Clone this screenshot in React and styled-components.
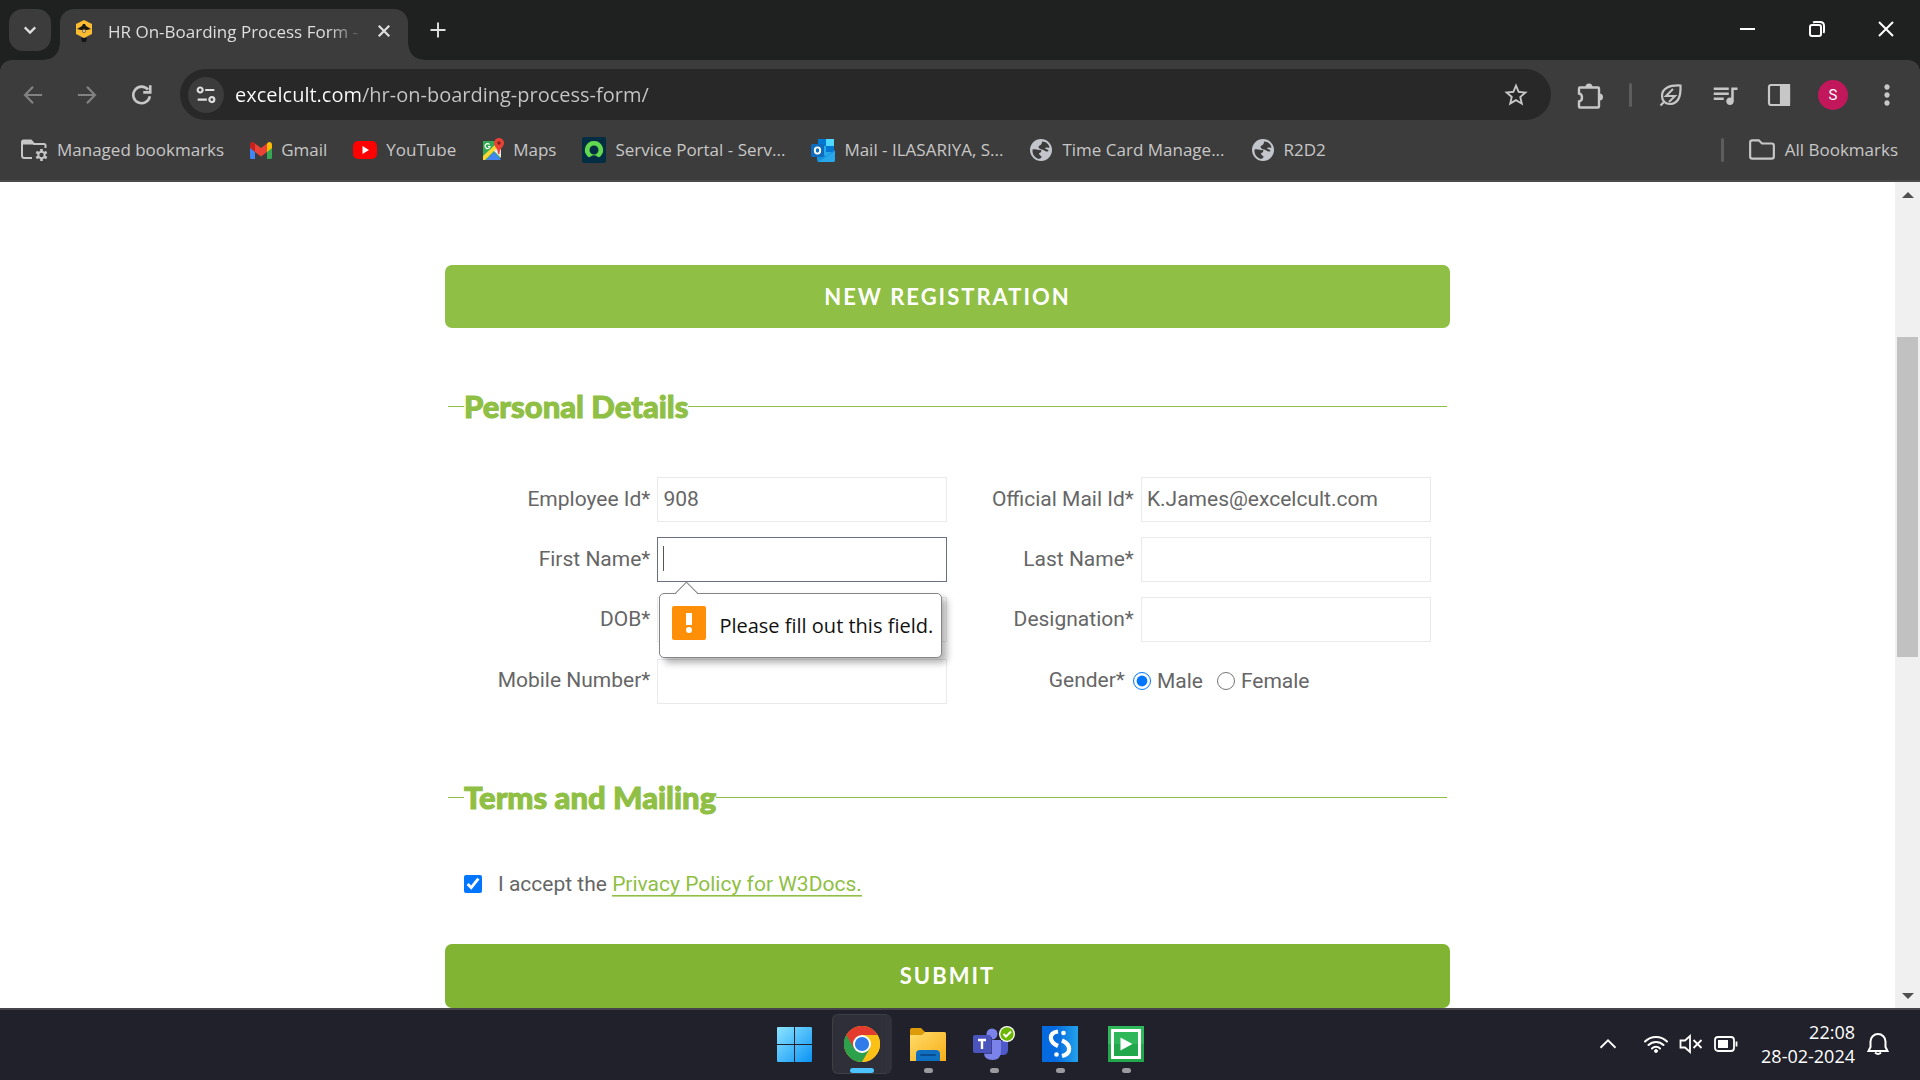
import React from "react";
import styled, { createGlobalStyle, css } from "styled-components";
import { MdStarBorder, MdQueueMusic, MdMoreVert } from "react-icons/md";

const ui = '"Open Sans", "Noto Sans", sans-serif';

const Global = createGlobalStyle`
  *, *::before, *::after { box-sizing: border-box; }
  html, body { margin: 0; padding: 0; }
  body { background: #fff; font-family: Roboto, sans-serif; overflow: hidden; }
  button { font: inherit; color: inherit; border: 0; padding: 0; background: none; }
  svg { display: block; flex: none; }
`;

const Desktop = styled.div`
  display: flex;
  flex-direction: column;
  height: 100vh;
  background: #1f2120;
`;

/* ---------- tab strip ---------- */
const TabStrip = styled.header`
  display: flex;
  align-items: flex-start;
  height: 60px;
  padding-left: 9px;
  color: #dedede;
  font: 17px/24px ${ui};
`;
const TabSearch = styled.button`
  display: grid;
  place-items: center;
  width: 42px;
  height: 42px;
  margin: 9px 9px 0 0;
  border-radius: 14px;
  background: #3c3c3c;
`;
const Tab = styled.div`
  position: relative;
  display: flex;
  align-items: center;
  width: 348px;
  height: 51px;
  margin-top: 9px;
  padding: 0 13px 8px 16px;
  border-radius: 14px 14px 0 0;
  background: #3c3c3c;
  &::before, &::after {
    content: "";
    position: absolute;
    bottom: 0;
    width: 15px;
    height: 15px;
  }
  &::before { right: 100%; background: radial-gradient(circle at 0 0, transparent 14px, #3c3c3c 15px); }
  &::after { left: 100%; background: radial-gradient(circle at 100% 0, transparent 14px, #3c3c3c 15px); }
`;
const TabTitle = styled.span`
  flex: 1;
  margin: 3px 0 0 16px;
  white-space: nowrap;
  mask-image: linear-gradient(90deg, #000 220px, transparent 256px);
`;
const PlainButton = styled.button`
  display: grid;
  place-items: center;
  width: ${(p) => p.$w || 22}px;
  height: ${(p) => p.$h || 22}px;
`;
const NewTab = styled(PlainButton)`
  margin-left: 9px;
`;
const WindowControls = styled.div`
  display: flex;
  margin-left: auto;
  color: #fff;
`;

/* ---------- toolbar ---------- */
const Chrome = styled.section`
  flex: none;
  border-bottom: 2px solid #4a4a4a;
  border-radius: 12px 12px 0 0;
  background: #3c3c3c;
  color: #c7c7c7;
`;
const Toolbar = styled.div`
  display: flex;
  align-items: center;
  height: 69px;
  padding: 0 6px;
`;
const ToolButton = styled(PlainButton)`
  width: 54px;
  height: 42px;
  opacity: ${(p) => (p.disabled ? 0.5 : 1)};
  color: #c7c7c7;
`;
const Omnibox = styled.div`
  flex: 1;
  display: flex;
  align-items: center;
  height: 51px;
  margin: 0 12px;
  padding: 0 8px;
  border-radius: 26px;
  background: #282828;
`;
const SiteInfo = styled.button`
  display: grid;
  place-items: center;
  width: 36px;
  height: 36px;
  border-radius: 50%;
  background: #3c3c3c;
  color: #dedede;
`;
const Url = styled.input`
  flex: 1;
  min-width: 0;
  margin-left: 11px;
  padding: 0;
  border: 0;
  outline: 0;
  color: transparent;
  background: linear-gradient(90deg, #fff 126px, #c7c7c7 126px);
  background-clip: text;
  font: 20px/30px ${ui};
`;
const Divider = styled.span`
  width: 3px;
  height: 24px;
  border-radius: 2px;
  background: #5d5d5d;
`;
const ToolDivider = styled(Divider)`
  margin: 0 12px;
`;
const Avatar = styled.button`
  display: grid;
  place-items: center;
  width: 30px;
  height: 30px;
  margin: 0 12px;
  border-radius: 50%;
  background: #c2185b;
  color: #fff;
  font: 15px/30px Roboto, sans-serif;
`;

/* ---------- bookmarks ---------- */
const Bookmarks = styled.nav`
  display: flex;
  align-items: center;
  gap: 26px;
  height: 51px;
  padding: 0 22px 9px 20px;
  font: 17px/24px ${ui};
`;
const Bookmark = styled.a`
  display: flex;
  align-items: center;
  gap: 9px;
  color: #c7c7c7;
  text-decoration: none;
  white-space: nowrap;
`;
const AllBookmarks = styled.div`
  display: flex;
  align-items: center;
  gap: 24px;
  margin-left: auto;
`;

/* ---------- web page ---------- */
const Viewport = styled.div`
  flex: 1;
  min-height: 0;
  display: flex;
  background: #fff;
`;
const Page = styled.main`
  flex: 1;
  min-width: 0;
  overflow: hidden;
  padding-top: 83px;
  color: #666;
  font: 21px/32px Roboto, sans-serif;
`;
const Form = styled.form`
  max-width: 1005px;
  margin: 0 auto;
`;
const bar = css`
  width: 100%;
  height: 63px;
  border-radius: 7px;
  color: #fff;
  text-align: center;
  font: 700 22px/63px Lato, sans-serif;
  letter-spacing: 2px;
`;
const FormTitle = styled.h2`
  ${bar}
  margin: 0 0 54px;
  background: #8fbf44;
`;
const Submit = styled.button`
  ${bar}
  height: 64px;
  margin-top: 44px;
  padding-bottom: 2px;
  background: #82b433;
`;
const Group = styled.fieldset`
  min-width: 0;
  margin: 0 3px;
  padding: 47px 16px 0;
  border: 0;
  border-top: 1px solid #8fbf44;
  & + & { margin-top: 68px; }
`;
const Legend = styled.legend`
  padding: 0;
  color: #8fbf44;
  font: 900 31px/48px Lato, sans-serif;
  -webkit-text-stroke: 1px #8fbf44;
`;
const Fields = styled.div`
  display: grid;
  grid-template-columns: 1fr 1fr;
  grid-template-rows: 45px 45px 45px 48px;
  row-gap: 15px;
`;
const Field = styled.div`
  position: relative;
  display: grid;
  grid-template-columns: 2fr 3fr;
  align-items: center;
`;
const Label = styled.label`
  padding-right: ${(p) => (p.$wide ? 16 : 7)}px;
  padding-bottom: 2px;
  text-align: right;
  white-space: nowrap;
`;
const TextInput = styled.input`
  display: block;
  width: 100%;
  height: 45px;
  padding: 0 5px 2px;
  border: 1px solid ${(p) => (p.$active ? "#6b7080" : "#e8eaed")};
  outline: 0;
  border-radius: 0;
  background: #fff;
  color: #666;
  font: 21px/30px Roboto, sans-serif;
`;
const InputWrap = styled.div`
  position: relative;
`;
const Caret = styled.span`
  position: absolute;
  left: 6px;
  top: 9px;
  width: 1px;
  height: 25px;
  background: #555;
`;
const Bubble = styled.div`
  position: absolute;
  z-index: 2;
  left: 2px;
  top: 56px;
  display: flex;
  align-items: center;
  gap: 13px;
  width: 283px;
  height: 65px;
  padding: 12px 0 12px 12px;
  border: 1px solid #858585;
  border-radius: 5px;
  background: #fff;
  box-shadow: 5px 5px 7px rgba(0, 0, 0, 0.3);
  color: #111;
  white-space: nowrap;
  font: 20px/30px ${ui};
  svg { align-self: flex-start; }
  &::before {
    content: "";
    position: absolute;
    left: 18px;
    top: -9px;
    width: 17px;
    height: 17px;
    border: solid #858585;
    border-width: 1px 0 0 1px;
    background: linear-gradient(135deg, #fff 50%, transparent 50%);
    transform: rotate(45deg);
  }
`;
const Radios = styled.div`
  display: flex;
  align-items: center;
  gap: 14px;
  margin-left: -8px;
`;
const Choice = styled.label`
  display: flex;
  align-items: center;
  gap: ${(p) => p.$gap || 6}px;
`;
const Tick = styled.input`
  width: 18px;
  height: 18px;
  margin: 0;
  accent-color: #0075ff;
`;
const Policy = styled.a`
  display: inline-block;
  border-bottom: 1px solid #bcd98f;
  box-shadow: inset 0 -1px #8fbf44;
  color: #8fbf44;
  text-decoration: none;
  line-height: 24px;
`;

/* ---------- scrollbar ---------- */
const Scrollbar = styled.div`
  display: flex;
  flex-direction: column;
  width: 25px;
  background: #f0f0f0;
  color: #505050;
`;
const Track = styled.div`
  flex: 1;
  display: grid;
  grid-template-rows: 130fr 320fr 326fr;
  padding: 0 2px;
`;
const Thumb = styled.div`
  grid-row: 2;
  background: #c1c1c1;
`;

/* ---------- taskbar ---------- */
const Taskbar = styled.footer`
  flex: none;
  display: grid;
  grid-template-columns: 1fr auto 1fr;
  height: 72px;
  padding-bottom: 2px;
  border-top: 2px solid #454449;
  background: #20212a;
  color: #fff;
`;
const Apps = styled.div`
  grid-column: 2;
  display: flex;
  align-items: center;
`;
const AppButton = styled.button`
  position: relative;
  display: grid;
  place-items: center;
  width: ${(p) => (p.$active ? 60 : 66)}px;
  height: 60px;
  margin: ${(p) => (p.$active ? "0 3px 0 5px" : 0)};
  border-radius: 6px;
  ${(p) =>
    p.$active &&
    css`
      border: 1px solid #3d3e46;
      border-right: 7px solid #30313a;
      background: #2e2f38;
      padding-left: 6px;
    `}
  &::after {
    content: "";
    position: absolute;
    bottom: ${(p) => (p.$active ? 0 : 1)}px;
    left: 50%;
    display: ${(p) => (p.$open ? "block" : "none")};
    width: ${(p) => (p.$active ? 24 : 9)}px;
    height: 5px;
    margin-left: ${(p) => (p.$active ? -9 : -4)}px;
    border-radius: 3px;
    background: ${(p) => (p.$active ? "#4cc2ff" : "#9a9a9f")};
  }
`;
const Tray = styled.div`
  display: flex;
  align-items: center;
  justify-content: flex-end;
  gap: 11px;
  padding-right: 30px;
`;
const Clock = styled.time`
  margin-left: 12px;
  text-align: right;
  font: 18px/24px ${ui};
`;
const Overflow = styled(PlainButton)`
  margin-right: 14px;
`;

/* ---------- icons ---------- */
const Line = ({ s = 24, w = 2, box = 24, children, ...rest }) => (
  <svg width={s} height={s} viewBox={`0 0 ${box} ${box}`} fill="none" stroke="currentColor" strokeWidth={w} aria-hidden="true" {...rest}>
    {children}
  </svg>
);
const BeeIcon = () => (
  <svg width="16" height="22" viewBox="0 0 16 22">
    <path d="M8 0l8 4v10l-8 4-8-4V4z" fill="#fbbc34" />
    <path d="M1 9l5-3 1-2h2l1 2 5 3-4 1H5z" fill="#1c1a12" />
    <circle cx="8" cy="11" r="2" fill="#8a6a30" />
    <circle cx="8" cy="11" r="1" fill="#e8e0d0" />
    <path d="M5 18h6l-1 4H6z" fill="#151515" />
  </svg>
);
const GearFolder = () => (
  <Line s={28} box={28}>
    <path d="M12 22H4.500q-2.500 0-2.500-2.500V6q0-1.500 1.500-1.500H11l3 3.500h10q1.500 0 1.500 1.500V12" />
    <path d="M2 4.500h9l3 4H2z" fill="currentColor" stroke="none" />
    <circle cx="21.500" cy="19" r="3.200" />
    <path strokeWidth="2.600" d="M21.500 13v2.400M21.500 22.600V25M16.300 16l2.100 1.200M24.600 20.800l2.100 1.200M16.300 22l2.100-1.200M24.600 17.200l2.100-1.200" />
  </Line>
);
const GmailIcon = () => (
  <svg width="22" height="17" viewBox="0 0 22 17">
    <path d="M0 3h5v14H1.500Q0 17 0 15.500z" fill="#4285f4" />
    <path d="M17 3h5v12.500q0 1.500-1.500 1.500H17z" fill="#34a853" />
    <path d="M17 1.500Q19-.6 21 .5q1 .7 1 2.500v3l-5 4z" fill="#fbbc04" />
    <path d="M0 3Q0 1.200 1 .5 3-.6 5 1.500V10L0 6z" fill="#c5221f" />
    <path d="M5 1.500L11 6l6-4.500V10l-6 4.500L5 10z" fill="#ea4335" />
  </svg>
);
const YouTubeIcon = () => (
  <svg width="24" height="18" viewBox="0 0 24 18">
    <rect width="24" height="18" rx="5" fill="#f00" />
    <path d="M9.500 5v8l6.500-4z" fill="#fff" />
  </svg>
);
const MapsIcon = () => (
  <svg width="22" height="24" viewBox="0 0 22 24">
    <path d="M1 3h17v19H1z" fill="#34a853" />
    <path d="M10 11l9 9V9h-7z" fill="#e8e8e8" />
    <path d="M1 18L15 5l3 2L3 22H1z" fill="#fdd835" />
    <path d="M4 22l8-8 7 8z" fill="#4285f4" />
    <path d="M7.500 6.500A2.500 2.500 0 1 0 8 8.500H6" stroke="#fff" fill="none" strokeWidth="1.200" />
    <path d="M17 0a5 5 0 0 0-5 5c0 4 4 5 4 11h1.500c0-6 4.500-7 4.500-11a5 5 0 0 0-5-5z" fill="#ea4335" />
    <circle cx="17" cy="5" r="1.800" fill="#7b2320" />
  </svg>
);
const ServiceIcon = () => (
  <svg width="24" height="26" viewBox="0 0 24 26">
    <rect width="24" height="26" rx="2" fill="#032d42" />
    <path d="M12 4a9 9 0 0 0-6.300 15.500c.8.800 1.800.9 2.700.2a5.800 5.800 0 0 1 7.200 0c.9.700 1.900.6 2.700-.2A9 9 0 0 0 12 4zm0 13.500a4.500 4.500 0 1 1 0-9 4.500 4.500 0 0 1 0 9z" fill="#62d84e" />
  </svg>
);
const OutlookIcon = () => (
  <svg width="24" height="24" viewBox="0 0 24 24">
    <rect x="7" y="1" width="16" height="17" rx="1" fill="#28a8ea" />
    <path d="M7 1h8v7H7zM15 8h8v6h-8z" fill="#0078d4" />
    <path d="M15 1h8v7h-8z" fill="#50d9ff" />
    <path d="M6 13l9 5 9-6v10q0 2-2 2H8q-2 0-2-2z" fill="#1490df" />
    <path d="M7 24l17-11v9q0 2-2 2z" fill="#28a8ea" />
    <rect y="6" width="13" height="13" rx="1.500" fill="#0f6cbd" />
    <ellipse cx="6.500" cy="12.500" rx="2.700" ry="3.100" fill="none" stroke="#fff" strokeWidth="1.900" />
  </svg>
);
const GlobeIcon = () => (
  <svg width="24" height="24" viewBox="0 0 24 24">
    <circle cx="12" cy="12" r="11" fill="#c2c5cb" />
    <path d="M3.500 11.500c3-1 5.500.5 8.500.5 1 1.500-.5 3-2 3 0 3 2.500 2 2.500 4 0 1-1.500 1.500-2.500 2-4-1-7-4.500-6.500-9.500zM13 3.500l3 .5c2.500 1 4 3 4.500 5.500-2 1-3.500-1-4.500 1 1 1 3.500 1 3.500 2.500-3 2-4-1.500-7-1.500-1.500-1-3-1-3-3 1.500-1.500 3.500-1.500 3.500-5z" fill="#3c3c3c" />
  </svg>
);
const FolderIcon = () => (
  <Line s={28} box={26}>
    <path d="M2 6q0-2 2-2h6l3 3h9q2 0 2 2v10q0 2-2 2H4q-2 0-2-2z" />
  </Line>
);

const StartIcon = () => (
  <svg width="35" height="35" viewBox="0 0 35 35">
    <defs>
      <linearGradient id="win" x1="0" y1="0" x2="1" y2="1">
        <stop offset="0" stopColor="#8ce4ff" />
        <stop offset="1" stopColor="#0a93f5" />
      </linearGradient>
    </defs>
    <path d="M1 0h16v17H0V1q0-1 1-1zM18 0h16q1 0 1 1v16H18zM0 18h17v17H1q-1 0-1-1zM18 18h17v16q0 1-1 1H18z" fill="url(#win)" />
  </svg>
);
const ChromeIcon = () => (
  <svg width="36" height="36" viewBox="0 0 36 36">
    <circle cx="18" cy="18" r="18" fill="#fbc116" />
    <path d="M18 18L2.400 9A18 18 0 0 0 18 36l9-13z" fill="#2da04b" />
    <path d="M2.400 9A18 18 0 0 1 33.600 9H18v9l-7.800 4.500z" fill="#e33b2e" />
    <path d="M25.800 22.500L18 36A18 18 0 0 0 33.600 9H18z" fill="#fbc116" />
    <circle cx="18" cy="18" r="9" fill="#fff" />
    <circle cx="18" cy="18" r="7.100" fill="#2f7bea" />
  </svg>
);
const ExplorerIcon = () => (
  <svg width="36" height="33" viewBox="0 0 36 33">
    <defs>
      <linearGradient id="fold" x1="0" y1="0" x2="1" y2="1">
        <stop offset="0" stopColor="#ffdc6b" />
        <stop offset="1" stopColor="#f8ae17" />
      </linearGradient>
    </defs>
    <path d="M0 2q0-2 2-2h9l4 4h19q2 0 2 2v6H0z" fill="#dd9a09" />
    <path d="M0 7h12l3-3h19q2 0 2 2v27H0z" fill="url(#fold)" />
    <path d="M6 33v-7q0-4 4-4h16q4 0 4 4v7z" fill="#0f6fc0" />
    <path d="M11 27h14" stroke="#0a4c8c" strokeWidth="2" strokeLinecap="round" />
  </svg>
);
const TeamsIcon = () => (
  <svg width="42" height="36" viewBox="0 0 42 36">
    <circle cx="19" cy="8" r="5.500" fill="#7b83eb" />
    <path d="M26 15h9v9q0 5-5 5h-4z" fill="#5059c9" />
    <path d="M11 14h17v11q0 9-8.500 9T11 27z" fill="#7b83eb" />
    <path d="M18 11h1v17h-8v-3z" fill="#3d438f" />
    <rect y="9" width="18" height="18" rx="2" fill="#4b53bc" />
    <path d="M5 14h8M9 14v9" stroke="#fff" strokeWidth="2.400" />
    <circle cx="34" cy="8" r="8" fill="#fff" />
    <circle cx="34" cy="8" r="6.700" fill="#6bb700" />
    <path d="M30.500 8l2.500 2.500 5-5" stroke="#fff" strokeWidth="2" fill="none" />
  </svg>
);
const LinkAppIcon = () => (
  <svg width="36" height="36" viewBox="0 0 36 36">
    <defs>
      <linearGradient id="sapp"><stop offset="0.350" stopColor="#0569df" /><stop offset="1" stopColor="#22a1ec" /></linearGradient>
    </defs>
    <rect width="36" height="36" fill="url(#sapp)" />
    <g fill="none" stroke="#fff" strokeWidth="4.200">
      <path d="M16 5.500C6 7 7 16 16 20" />
      <path d="M20 14.500c9 4 10 13 0 15.500" />
    </g>
    <circle cx="21.500" cy="7" r="2.300" fill="#fff" />
    <circle cx="14.500" cy="28.500" r="2.300" fill="#fff" />
    <path d="M18 6v24" stroke="#0569df" />
  </svg>
);
const PlayAppIcon = () => (
  <svg width="36" height="36" viewBox="0 0 36 36">
    <rect width="36" height="36" fill="#2eb85a" />
    <path d="M0 18h36v18H0z" fill="#20a84b" />
    <rect x="4.500" y="4.500" width="27" height="27" fill="none" stroke="#fff" strokeWidth="3" />
    <path d="M12.500 11.500v13L24.500 18z" fill="#fff" />
  </svg>
);

const bookmarks = [
  ["Managed bookmarks", GearFolder],
  ["Gmail", GmailIcon],
  ["YouTube", YouTubeIcon],
  ["Maps", MapsIcon],
  ["Service Portal - Serv...", ServiceIcon],
  ["Mail - ILASARIYA, S...", OutlookIcon],
  ["Time Card Manage...", GlobeIcon],
  ["R2D2", GlobeIcon],
];

const apps = [
  ["Start", StartIcon],
  ["Google Chrome", ChromeIcon, true, true],
  ["File Explorer", ExplorerIcon, true],
  ["Teams", TeamsIcon, true],
  ["Shortcut", LinkAppIcon, true],
  ["Player", PlayAppIcon, true],
];

function TextField({ id, label, value = "", active, children }) {
  return (
    <Field>
      <Label htmlFor={id}>{label}</Label>
      <InputWrap>
        <TextInput id={id} name={id} defaultValue={value} $active={active} />
        {children}
      </InputWrap>
    </Field>
  );
}

export default function App() {
  return (
    <Desktop>
      <Global />
      <TabStrip>
        <TabSearch aria-label="Search tabs">
          <Line s={18} w={3}><path d="M5 8.500l7 7 7-7" /></Line>
        </TabSearch>
        <Tab>
          <BeeIcon />
          <TabTitle>HR On-Boarding Process Form -</TabTitle>
          <PlainButton aria-label="Close tab">
            <Line s={18} w={3}><path d="M5 5l14 14M19 5L5 19" /></Line>
          </PlainButton>
        </Tab>
        <NewTab $w={42} $h={60} aria-label="New tab">
          <Line s={18} w={2.6}><path d="M12 2v20M2 12h20" /></Line>
        </NewTab>
        <WindowControls>
          <PlainButton $w={69} $h={58} aria-label="Minimize">
            <Line s={16} w={2} box={16}><path d="M0 8h15" /></Line>
          </PlainButton>
          <PlainButton $w={69} $h={58} aria-label="Restore">
            <Line s={16} w={2} box={16}>
              <rect x="1" y="4" width="11" height="11" rx="2" />
              <path d="M4 1.500Q5 1 6 1h5q4 0 4 4v5q0 1-.5 2" />
            </Line>
          </PlainButton>
          <PlainButton $w={69} $h={58} aria-label="Close">
            <Line s={16} w={2} box={16}><path d="M1 1l14 14M15 1L1 15" /></Line>
          </PlainButton>
        </WindowControls>
      </TabStrip>

      <Chrome>
        <Toolbar>
          <ToolButton disabled aria-label="Back">
            <Line s={20} w={2.6}><path d="M23 12H3M12 2L2.500 12l9.500 10" /></Line>
          </ToolButton>
          <ToolButton disabled aria-label="Forward">
            <Line s={20} w={2.6}><path d="M1 12h20M12 2l9.500 10L12 22" /></Line>
          </ToolButton>
          <ToolButton aria-label="Reload">
            <Line s={21} w={3}><path d="M19.500 6.500A9.500 9.500 0 1 0 21.500 14M22 1.500v8h-8" /></Line>
          </ToolButton>
          <Omnibox>
            <SiteInfo aria-label="Site information">
              <Line s={20} w={2.6}>
                <circle cx="5" cy="6" r="3" /><path d="M11 6h11M2 17.500h11" /><circle cx="19" cy="17.500" r="3" />
              </Line>
            </SiteInfo>
            <Url aria-label="Address" defaultValue="excelcult.com/hr-on-boarding-process-form/" />
            <ToolButton aria-label="Bookmark this tab"><MdStarBorder size={28} /></ToolButton>
          </Omnibox>
          <ToolButton aria-label="Extensions">
            <Line s={28} w={2.4} box={28}>
              <path d="M4 6.500h18q1 0 1 1v18q0 1-1 1H4q-1 0-1-1v-5q3-.500 3-4t-3-4v-5q0-1 1-1z" />
              <path d="M9.500 6a3.500 3.500 0 0 1 7 0zM23.500 12.500a3.500 3.500 0 0 1 0 7z" fill="currentColor" stroke="none" />
            </Line>
          </ToolButton>
          <ToolDivider />
          <ToolButton aria-label="Energy saver">
            <Line s={24} w={2.2}>
              <path d="M21.500 2.500c.5 11-2.500 18-10 18.500-5 .3-8.500-3-8.500-8C3 5.500 10 2 21.500 2.500zM1.500 22.500L6 18" />
              <path d="M14 6l-7 7h9l-6 6" strokeWidth="2" />
            </Line>
          </ToolButton>
          <ToolButton aria-label="Media controls"><MdQueueMusic size={30} /></ToolButton>
          <ToolButton aria-label="Side panel">
            <Line s={24} w={2.2}>
              <rect x="2" y="2" width="20" height="20" rx="2" />
              <path d="M14 2h8v20h-8z" fill="currentColor" />
            </Line>
          </ToolButton>
          <Avatar aria-label="Profile">S</Avatar>
          <ToolButton aria-label="Menu"><MdMoreVert size={32} /></ToolButton>
        </Toolbar>
        <Bookmarks aria-label="Bookmarks">
          {bookmarks.map(([name, Icon]) => (
            <Bookmark href="#" key={name}><Icon />{name}</Bookmark>
          ))}
          <AllBookmarks>
            <Divider />
            <Bookmark href="#"><FolderIcon />All Bookmarks</Bookmark>
          </AllBookmarks>
        </Bookmarks>
      </Chrome>

      <Viewport>
        <Page>
          <Form onSubmit={(e) => e.preventDefault()} noValidate>
            <FormTitle>NEW REGISTRATION</FormTitle>
            <Group>
              <Legend>Personal Details</Legend>
              <Fields>
                <TextField id="employee" label="Employee Id*" value="908" />
                <TextField id="mail" label="Official Mail Id*" value="K.James@excelcult.com" />
                <TextField id="first" label="First Name*" active>
                  <Caret />
                  <Bubble role="alert">
                    <svg width="34" height="34" viewBox="0 0 34 34">
                      <rect width="34" height="34" rx="2" fill="#ff8f07" />
                      <path d="M14 7h6v12h-6z" fill="#fff" />
                      <circle cx="17" cy="24" r="3" fill="#fff" />
                    </svg>
                    Please fill out this field.
                  </Bubble>
                </TextField>
                <TextField id="last" label="Last Name*" />
                <TextField id="dob" label="DOB*" />
                <TextField id="designation" label="Designation*" />
                <TextField id="mobile" label="Mobile Number*" />
                <Field role="radiogroup" aria-labelledby="gender">
                  <Label as="span" id="gender" $wide>Gender*</Label>
                  <Radios>
                    <Choice><Tick type="radio" name="gender" defaultChecked />Male</Choice>
                    <Choice><Tick type="radio" name="gender" />Female</Choice>
                  </Radios>
                </Field>
              </Fields>
            </Group>
            <Group>
              <Legend>Terms and Mailing</Legend>
              <Choice $gap={16}>
                <Tick type="checkbox" defaultChecked />
                <span>I accept the <Policy href="#">Privacy Policy for W3Docs.</Policy></span>
              </Choice>
            </Group>
            <Submit type="submit">SUBMIT</Submit>
          </Form>
        </Page>
        <Scrollbar aria-hidden="true">
          <PlainButton $w={25} $h={25} tabIndex={-1}>
            <svg width="12" height="6" viewBox="0 0 12 6"><path d="M0 6l6-6 6 6z" fill="currentColor" /></svg>
          </PlainButton>
          <Track><Thumb /></Track>
          <PlainButton $w={25} $h={25} tabIndex={-1}>
            <svg width="12" height="6" viewBox="0 0 12 6"><path d="M0 0l6 6 6-6z" fill="currentColor" /></svg>
          </PlainButton>
        </Scrollbar>
      </Viewport>

      <Taskbar>
        <Apps>
          {apps.map(([name, Icon, open, active]) => (
            <AppButton key={name} aria-label={name} $open={open} $active={active}><Icon /></AppButton>
          ))}
        </Apps>
        <Tray>
          <Overflow aria-label="Hidden icons">
            <Line s={18} w={2.4}><path d="M2 17l10-10 10 10" /></Line>
          </Overflow>
          <Line s={24} w={2} strokeLinecap="round">
            <path d="M1 9.500a15.500 15.500 0 0 1 22 0M4.500 13a10.600 10.600 0 0 1 15 0M8 16.500a5.700 5.700 0 0 1 8 0" />
            <circle cx="12" cy="19" r="1.500" fill="currentColor" strokeWidth="1" />
          </Line>
          <Line s={24} w={1.8}>
            <path d="M1.500 8.500h4.500L11 4v16l-5-4.500H1.500zM14.500 8l8 8M22.500 8l-8 8" />
          </Line>
          <Line s={24} w={1.8}>
            <rect x="1" y="5" width="19" height="14" rx="3" />
            <path d="M4 8h10v8H4z" fill="currentColor" stroke="none" />
            <path d="M22.500 9.500v5" />
          </Line>
          <Clock dateTime="2024-02-28T22:08">22:08<br />28-02-2024</Clock>
          <Line s={24} w={2}>
            <path d="M12 2a7.500 7.500 0 0 0-7.500 7.500V15l-2 4h19l-2-4V9.500A7.500 7.500 0 0 0 12 2zM9 20.500q3 3 6 0" />
          </Line>
        </Tray>
      </Taskbar>
    </Desktop>
  );
}
